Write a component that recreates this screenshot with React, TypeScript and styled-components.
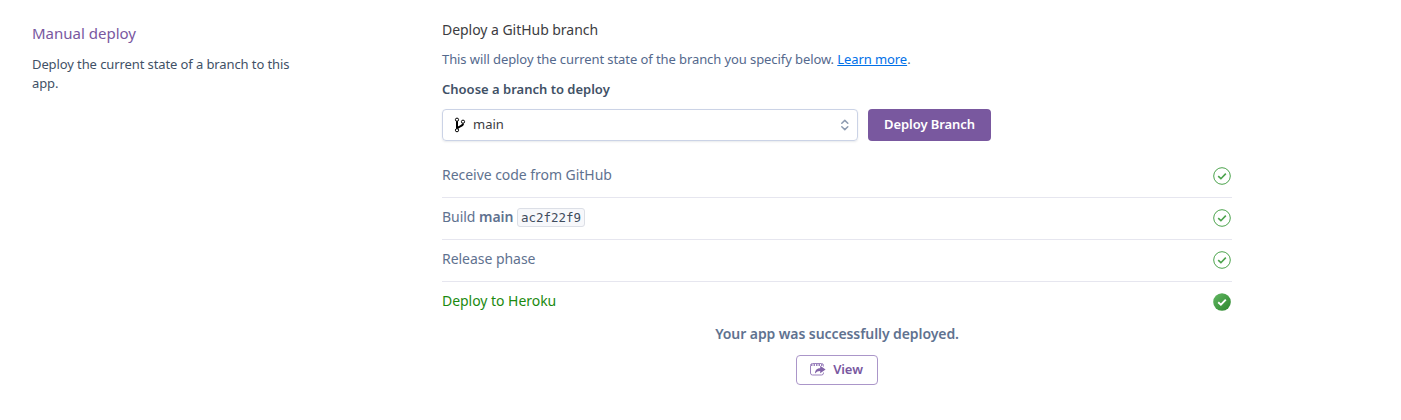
import React from 'react';
import styled, { createGlobalStyle, css } from 'styled-components';

const GlobalStyle = createGlobalStyle`
  * { box-sizing: border-box; }
  body {
    margin: 0;
    background: #fff;
    font-family: 'Noto Sans', 'Open Sans', sans-serif;
    font-size: 13px;
    color: #3f5166;
    -webkit-font-smoothing: antialiased;
  }
`;

const Section = styled.section`
  display: grid;
  grid-template-columns: 270px 790px;
  column-gap: 140px;
  min-height: 420px;
  padding: 20px 32px;
`;

const Aside = styled.div`
  padding-top: 1px;
`;

const SectionTitle = styled.h2`
  margin: 0;
  font-size: 15px;
  line-height: 24px;
  font-weight: 400;
  color: #79589f;
`;

const SectionText = styled.p`
  margin: 10px 0 0;
  line-height: 19px;
  letter-spacing: -0.1px;
  color: #3f5166;
`;

const Heading = styled.h3`
  margin: 0;
  font-size: 14px;
  line-height: 20px;
  letter-spacing: -0.04px;
  font-weight: 400;
  color: #3c3c41;
`;

const Description = styled.p`
  margin: 9px 0 0;
  line-height: 20px;
  letter-spacing: -0.085px;
  color: #54698d;
`;

const Link = styled.a`
  color: #0070e8;
  text-decoration: underline;
`;

const Label = styled.label`
  display: block;
  margin-top: 10px;
  line-height: 20px;
  font-weight: 600;
  color: #3f5166;
`;

const Controls = styled.div`
  display: flex;
  gap: 10px;
  margin-top: 10px;
`;

const BranchSelect = styled.div`
  display: flex;
  align-items: center;
  width: 416px;
  height: 32px;
  padding: 0 8px 0 11px;
  border: 1px solid #cbd3e6;
  border-radius: 4px;
  box-shadow: 0 1px 2px rgba(63, 81, 102, 0.12);
`;

const BranchName = styled.span`
  flex: 1;
  margin-left: 7px;
  padding-bottom: 2px;
  line-height: 20px;
  color: #3c3c41;
`;

const buttonBase = css`
  display: flex;
  align-items: center;
  justify-content: center;
  padding: 0 0 2px;
  border-radius: 4px;
  font-family: inherit;
  font-size: 13px;
  font-weight: 600;
  letter-spacing: -0.08px;
`;

const PrimaryButton = styled.button`
  ${buttonBase}
  width: 123px;
  height: 32px;
  border: 0;
  background: #79589f;
  color: #fff;
`;

const OutlineButton = styled.button`
  ${buttonBase}
  gap: 7px;
  width: 82px;
  height: 30px;
  padding-right: 1px;
  border: 1px solid #ab96c9;
  background: #fff;
  color: #79589f;
`;

const Steps = styled.ul`
  margin: 15px 0 0;
  padding: 0;
  list-style: none;
`;

const Step = styled.li<{ $current?: boolean }>`
  display: flex;
  align-items: center;
  justify-content: space-between;
  height: 42px;
  padding: 0 1px 3px 0;
  border-bottom: 1px solid ${p => (p.$current ? 'transparent' : '#e6e6ef')};
  font-size: 14px;
  letter-spacing: -0.04px;
  color: ${p => (p.$current ? '#1b8a0f' : '#5f7290')};

  svg { position: relative; top: 1px; }
`;

const StepLabel = styled.span`
  line-height: 20px;

  strong { font-weight: 600; }
`;

const Commit = styled.code`
  display: inline-block;
  height: 19px;
  padding: 0 3px;
  border: 1px solid #dcdfe6;
  border-radius: 3px;
  background: #f7f8fb;
  font-family: 'DejaVu Sans Mono', monospace;
  font-size: 12.5px;
  line-height: 17px;
  color: #3f4c5c;
`;

const Result = styled.div`
  display: flex;
  flex-direction: column;
  align-items: center;
  gap: 11px;
`;

const ResultText = styled.p`
  margin: 0;
  font-size: 14px;
  line-height: 20px;
  letter-spacing: -0.08px;
  font-weight: 600;
  color: #5f7290;
`;

const BranchIcon = () => (
  <svg width="12" height="16" viewBox="0 0 12 16" fill="none" stroke="#000">
    <path d="M3 4v8" strokeWidth="2" />
    <path d="M9 6.500C9 9.800 4.200 8.800 3.200 11.800" strokeWidth="2" />
    <circle cx="3" cy="2.700" r="1.600" fill="#fff" />
    <circle cx="9" cy="4.700" r="1.600" fill="#fff" />
    <circle cx="3" cy="13.200" r="1.600" fill="#fff" />
  </svg>
);

const SortIcon = () => (
  <svg width="9" height="12" viewBox="0 0 9 12" fill="none" stroke="#8c9ab0" strokeWidth="1.500" strokeLinecap="round" strokeLinejoin="round">
    <path d="M1.800 4.200 4.800 1.400l3 2.800M1.800 7.800l3 2.800 3-2.800" />
  </svg>
);

const CheckOutline = () => (
  <svg width="18" height="18" viewBox="0 0 18 18" fill="none" stroke="#4ba34c">
    <circle cx="9" cy="9" r="8.300" />
    <path d="M5.200 9.200 7.900 11.700 12.800 6.600" strokeWidth="1.600" />
  </svg>
);

const CheckSolid = () => (
  <svg width="18" height="18" viewBox="0 0 18 18" fill="none">
    <defs>
      <linearGradient id="check-fill" x1="0" y1="0" x2="1" y2="1">
        <stop offset="0" stopColor="#62b763" />
        <stop offset="1" stopColor="#2c862d" />
      </linearGradient>
    </defs>
    <circle cx="9" cy="9" r="8.800" fill="url(#check-fill)" />
    <path d="M5.200 9.200 7.900 11.700 12.800 6.600" stroke="#fff" strokeWidth="1.900" />
  </svg>
);

const OpenAppIcon = () => (
  <svg width="16" height="13" viewBox="0 0 16 13" fill="none" stroke="#9b82bd">
    <path d="M13.500 3.500v-1a2 2 0 0 0-2-2h-9a2 2 0 0 0-2 2v7.500a2 2 0 0 0 2 2h9a2 2 0 0 0 2-2V9.500" />
    <path d="M1 2h12" strokeWidth="2" strokeDasharray="1.500 1" />
    <path d="M5 10.600C5 6.900 7.300 5.200 10.200 5.200V2.800L15.600 6.600 10.200 10.200V7.900C8 7.900 6.500 8.500 5 10.600z" fill="#8263a8" stroke="none" />
  </svg>
);

export default function App() {
  return (
    <>
      <GlobalStyle />
      <Section>
        <Aside>
          <SectionTitle>Manual deploy</SectionTitle>
          <SectionText>Deploy the current state of a branch to this app.</SectionText>
        </Aside>
        <div>
          <Heading>Deploy a GitHub branch</Heading>
          <Description>
            This will deploy the current state of the branch you specify below. <Link href="#">Learn more</Link>.
          </Description>
          <Label>Choose a branch to deploy</Label>
          <Controls>
            <BranchSelect>
              <BranchIcon />
              <BranchName>main</BranchName>
              <SortIcon />
            </BranchSelect>
            <PrimaryButton>Deploy Branch</PrimaryButton>
          </Controls>
          <Steps>
            <Step><StepLabel>Receive code from GitHub</StepLabel><CheckOutline /></Step>
            <Step><StepLabel>Build <strong>main</strong> <Commit>ac2f22f9</Commit></StepLabel><CheckOutline /></Step>
            <Step><StepLabel>Release phase</StepLabel><CheckOutline /></Step>
            <Step $current><StepLabel>Deploy to Heroku</StepLabel><CheckSolid /></Step>
          </Steps>
          <Result>
            <ResultText>Your app was successfully deployed.</ResultText>
            <OutlineButton><OpenAppIcon />View</OutlineButton>
          </Result>
        </div>
      </Section>
    </>
  );
}
